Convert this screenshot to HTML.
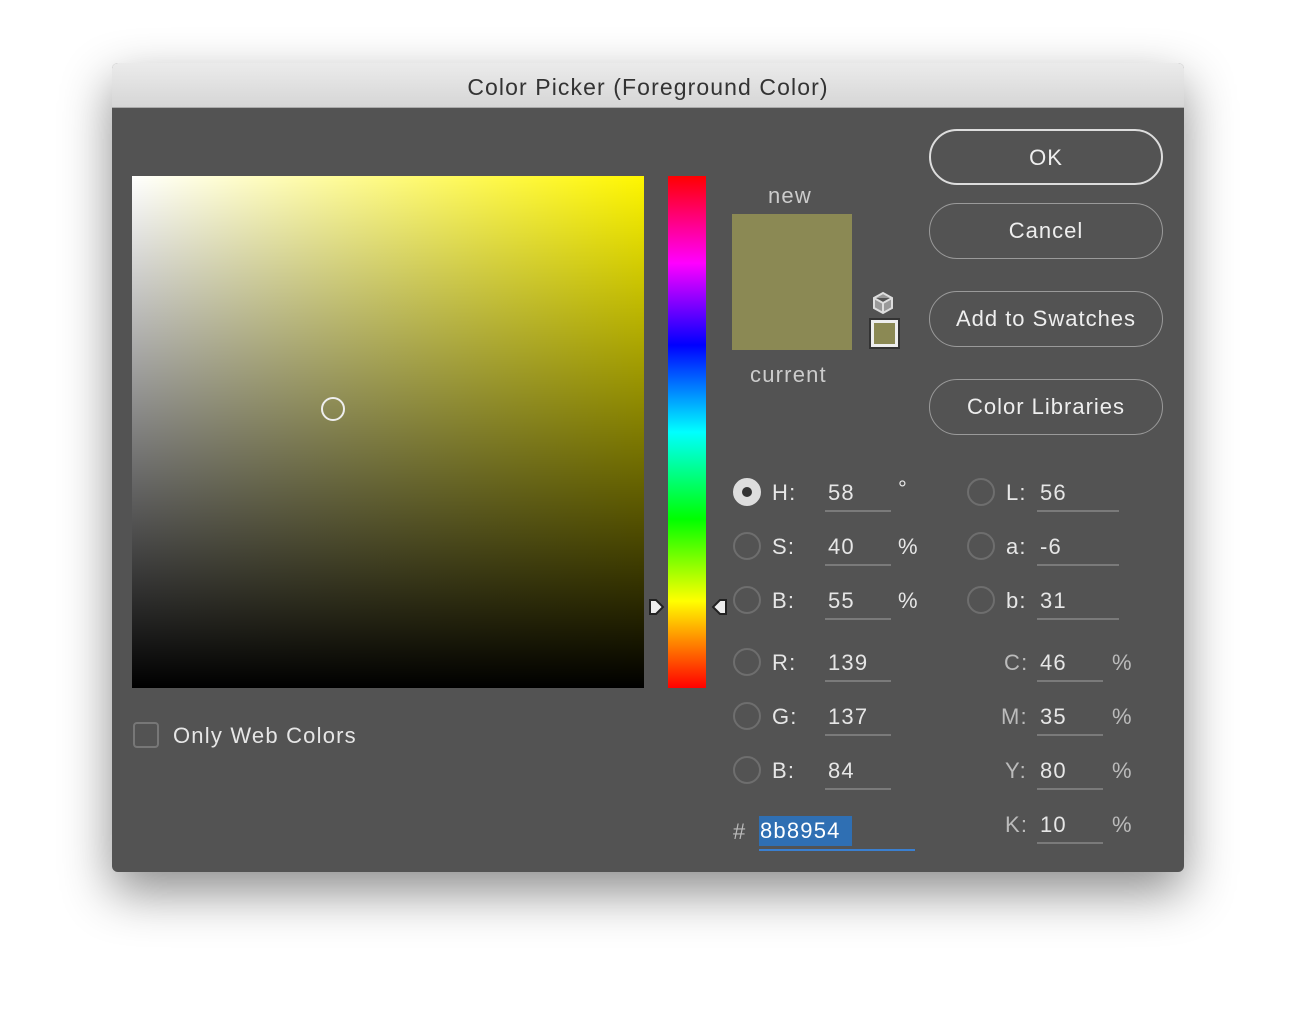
<!DOCTYPE html><html><head><style>
body{margin:0;width:1296px;height:1032px;background:#fff;font-family:"Liberation Sans",sans-serif;position:relative;overflow:hidden}
.d{position:absolute;left:112px;top:63px;width:1072px;height:809px;background:#535353;border-radius:6px;box-shadow:0 20px 50px rgba(0,0,0,.45);overflow:hidden}
.t{position:absolute;left:0;top:0;width:100%;height:44px;background:linear-gradient(#ebebeb,#d6d6d6);border-bottom:1px solid #aaa;text-align:center;line-height:48px;font-size:23px;color:#333;letter-spacing:1.1px}
.a{position:absolute;color:#e6e6e6;font-size:22px;line-height:1;letter-spacing:1.2px}
.b{position:absolute;left:817px;width:234px;height:56px;border:1px solid #9a9a9a;border-radius:28px;box-sizing:border-box;color:#eee;font-size:22px;text-align:center;line-height:54px;letter-spacing:1px}
.r{position:absolute;width:28px;height:28px;border:2px solid #6e6e6e;border-radius:50%;box-sizing:border-box}
.u{position:absolute;height:2px;background:#7a7a7a}
</style></head><body>
<div class="d">
<div class="t">Color Picker (Foreground Color)</div>
<div style="position:absolute;left:20px;top:113px;width:512px;height:512px;background:linear-gradient(to top,#000,rgba(0,0,0,0)),linear-gradient(to right,#fff,hsl(58,100%,50%))"></div>
<div style="position:absolute;left:209px;top:334px;width:24px;height:24px;border:2px solid #eee;border-radius:50%;box-sizing:border-box"></div>
<div style="position:absolute;left:556px;top:113px;width:38px;height:512px;background:linear-gradient(#f00,#f0f 17%,#00f 33%,#0ff 50%,#0f0 67%,#ff0 83%,#f00)"></div>
<svg style="position:absolute;left:536px;top:535px" width="80" height="18"><path d="M2 2h6l7 7-7 7H2z" fill="#eee" stroke="#222" stroke-width="2"/><path d="M78 2h-6l-7 7 7 7h6z" fill="#eee" stroke="#222" stroke-width="2"/></svg>
<div class="a" style="left:656px;top:122px;color:#ccc">new</div>
<div style="position:absolute;left:620px;top:151px;width:120px;height:136px;background:#8b8954"></div>
<div class="a" style="left:638px;top:301px;color:#ccc">current</div>
<svg style="position:absolute;left:758px;top:227px" width="26" height="26"><path d="M13 3l9 5v10l-9 5-9-5V8z M4 8l9 5 9-5 M13 13v10" fill="#999" stroke="#ddd" stroke-width="2"/></svg>
<div style="position:absolute;left:759px;top:257px;width:27px;height:27px;background:#8b8954;border:3px solid #eee;outline:2px solid #333;box-sizing:border-box"></div>
<div class="b" style="top:66px;border:2px solid #ddd">OK</div>
<div class="b" style="top:140px">Cancel</div>
<div class="b" style="top:228px">Add to Swatches</div>
<div class="b" style="top:316px">Color Libraries</div>
<div style="position:absolute;left:21px;top:659px;width:26px;height:26px;border:2px solid #777;border-radius:4px;box-sizing:border-box"></div>
<div class="a" style="left:61px;top:662px">Only Web Colors</div>

<div class="r" style="left:621px;top:415px;background:#ddd;border-color:#ddd"></div><div style="position:absolute;left:630px;top:424px;width:10px;height:10px;border-radius:50%;background:#333"></div>
<div class="r" style="left:621px;top:469px"></div>
<div class="r" style="left:621px;top:523px"></div>
<div class="r" style="left:621px;top:585px"></div>
<div class="r" style="left:621px;top:639px"></div>
<div class="r" style="left:621px;top:693px"></div>
<div class="r" style="left:855px;top:415px"></div>
<div class="r" style="left:855px;top:469px"></div>
<div class="r" style="left:855px;top:523px"></div>

<div class="a" style="left:660px;top:419px">H:</div><div class="a" style="left:716px;top:419px">58</div><div class="a" style="left:786px;top:415px">°</div>
<div class="a" style="left:660px;top:473px">S:</div><div class="a" style="left:716px;top:473px">40</div><div class="a" style="left:786px;top:473px">%</div>
<div class="a" style="left:660px;top:527px">B:</div><div class="a" style="left:716px;top:527px">55</div><div class="a" style="left:786px;top:527px">%</div>
<div class="a" style="left:660px;top:589px">R:</div><div class="a" style="left:716px;top:589px">139</div>
<div class="a" style="left:660px;top:643px">G:</div><div class="a" style="left:716px;top:643px">137</div>
<div class="a" style="left:660px;top:697px">B:</div><div class="a" style="left:716px;top:697px">84</div>
<div class="u" style="left:713px;top:447px;width:66px"></div><div class="u" style="left:713px;top:501px;width:66px"></div><div class="u" style="left:713px;top:555px;width:66px"></div><div class="u" style="left:713px;top:617px;width:66px"></div><div class="u" style="left:713px;top:671px;width:66px"></div><div class="u" style="left:713px;top:725px;width:66px"></div>
<div class="a" style="left:621px;top:758px;color:#bbb">#</div>
<div style="position:absolute;left:647px;top:753px;width:93px;height:30px;background:#2f6fb3"></div>
<div class="a" style="left:648px;top:757px;color:#fff">8b8954</div>
<div style="position:absolute;left:647px;top:786px;width:156px;height:2px;background:#3a7fd0"></div>

<div class="a" style="left:894px;top:419px">L:</div><div class="a" style="left:928px;top:419px">56</div>
<div class="a" style="left:894px;top:473px">a:</div><div class="a" style="left:928px;top:473px">-6</div>
<div class="a" style="left:894px;top:527px">b:</div><div class="a" style="left:928px;top:527px">31</div>
<div class="u" style="left:925px;top:447px;width:82px"></div><div class="u" style="left:925px;top:501px;width:82px"></div><div class="u" style="left:925px;top:555px;width:82px"></div>
<div class="a" style="left:892px;top:589px;color:#bbb">C:</div><div class="a" style="left:928px;top:589px">46</div><div class="a" style="left:1000px;top:589px;color:#bbb">%</div>
<div class="a" style="left:889px;top:643px;color:#bbb">M:</div><div class="a" style="left:928px;top:643px">35</div><div class="a" style="left:1000px;top:643px;color:#bbb">%</div>
<div class="a" style="left:893px;top:697px;color:#bbb">Y:</div><div class="a" style="left:928px;top:697px">80</div><div class="a" style="left:1000px;top:697px;color:#bbb">%</div>
<div class="a" style="left:893px;top:751px;color:#bbb">K:</div><div class="a" style="left:928px;top:751px">10</div><div class="a" style="left:1000px;top:751px;color:#bbb">%</div>
<div class="u" style="left:925px;top:617px;width:66px"></div><div class="u" style="left:925px;top:671px;width:66px"></div><div class="u" style="left:925px;top:725px;width:66px"></div><div class="u" style="left:925px;top:779px;width:66px"></div>
</div>
</body></html>
